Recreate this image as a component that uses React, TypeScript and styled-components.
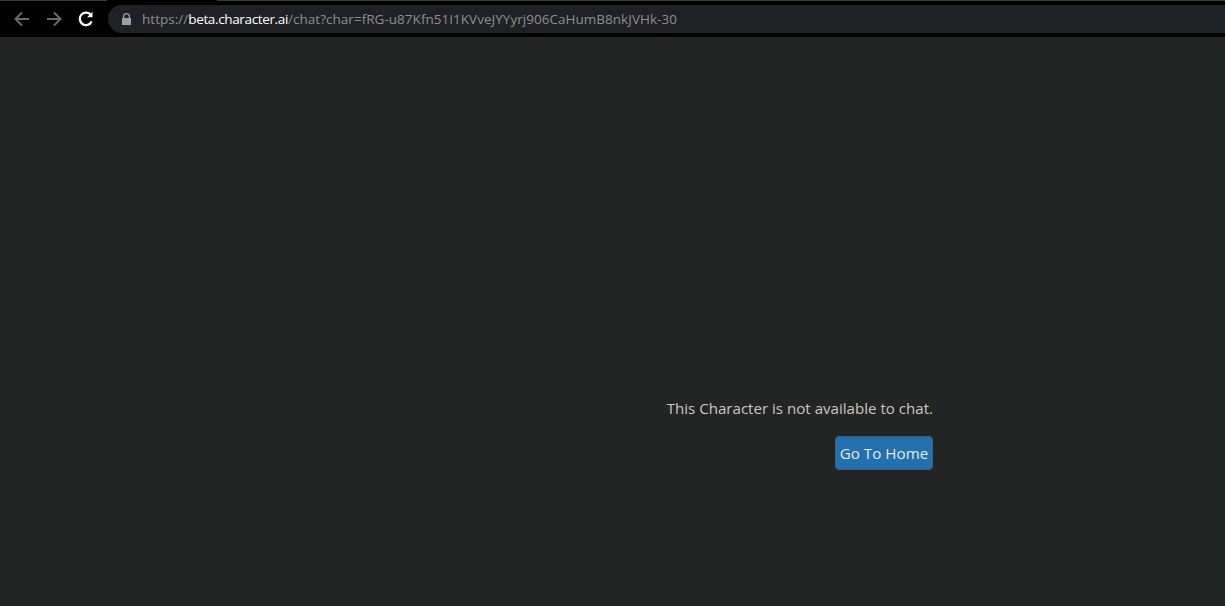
import React from "react";
import styled, { createGlobalStyle } from "styled-components";

const Global = createGlobalStyle`
  html, body { margin: 0; padding: 0; height: 100%; background: #232524; overflow: hidden; }
  #root { height: 100%; }
`;

const Page = styled.div`
  height: 606px;
  display: flex;
  flex-direction: column;
  background: #232524;
`;

const TabStrip = styled.div`
  height: 1px;
  flex: none;
  display: flex;
  background: #3a3b3d;
`;

const ActiveTab = styled.div`
  width: 110px;
  margin-left: 107px;
  background: #000;
`;

const Toolbar = styled.div`
  height: 36px;
  flex: none;
  box-sizing: border-box;
  padding: 4px 0;
  display: flex;
  align-items: center;
  background: #000;
`;

const NavGroup = styled.div`
  width: 108px;
  flex: none;
  box-sizing: border-box;
  padding-left: 13px;
  display: flex;
  align-items: center;
  gap: 14px;
`;

const NavIcon = styled.svg<{ $on?: boolean }>`
  width: 18px;
  height: 18px;
  flex: none;
  fill: none;
  stroke: ${(p) => (p.$on ? "#fff" : "#6a6a6a")};
  stroke-width: ${(p) => (p.$on ? 2.3 : 2)};
`;

const Omnibox = styled.div`
  flex: 1;
  height: 28px;
  display: flex;
  align-items: center;
  padding-left: 13px;
  border-radius: 14px 0 0 14px;
  background: #202124;
  font: 13.5px "Open Sans", "Noto Sans", sans-serif;
  letter-spacing: 0.03px;
  color: #8d8e90;
  white-space: nowrap;
`;

const Lock = styled.svg`
  width: 11px;
  height: 12px;
  flex: none;
  margin-right: 10px;
  fill: #9aa0a6;
`;

const Host = styled.span`
  color: #fff;
  font-weight: 500;
  letter-spacing: -0.36px;
`;

const Content = styled.main`
  flex: 1;
  display: flex;
  flex-direction: column;
  align-items: flex-end;
  padding: 361px 292px 0 0;
  font: 15.1px "Open Sans", "Noto Sans", sans-serif;
  color: #c9c7c3;
`;

const Message = styled.p`
  margin: 0;
  line-height: 20px;
`;

const HomeButton = styled.button`
  margin-top: 18px;
  height: 34px;
  width: 98px;
  padding: 0;
  box-sizing: border-box;
  border: 1px solid #3f5f7a;
  border-radius: 4px;
  background: #2270ae;
  color: #e4e8ea;
  font: 15.2px "Open Sans", "Noto Sans", sans-serif;
`;

export default function App() {
  return (
    <Page>
      <Global />
      <TabStrip>
        <ActiveTab />
      </TabStrip>
      <Toolbar>
        <NavGroup>
          <NavIcon viewBox="0 0 18 18">
            <path d="M16 9H3M9 2.5 2.5 9 9 15.5" />
          </NavIcon>
          <NavIcon viewBox="0 0 18 18">
            <path d="M2 9h13M9 2.5 15.5 9 9 15.5" />
          </NavIcon>
          <NavIcon $on viewBox="0 0 18 18">
            <path d="M14.6 11.5A6.2 6.2 0 1 1 14 5.2" />
            <path d="M15.5 1.8v5.4h-5.4" fill="#fff" stroke="none" />
          </NavIcon>
        </NavGroup>
        <Omnibox>
          <Lock viewBox="0 0 11 12">
            <path d="M2 5V3.5a3.5 3.5 0 0 1 7 0V5h1v7H1V5zm1.3 0h4.4V3.5a2.2 2.2 0 0 0-4.4 0z" />
          </Lock>
          https://<Host>beta.character.ai</Host>/chat?char=fRG-u87Kfn51I1KVveJYYyrj906CaHumB8nkJVHk-30
        </Omnibox>
      </Toolbar>
      <Content>
        <Message>This Character is not available to chat.</Message>
        <HomeButton>Go To Home</HomeButton>
      </Content>
    </Page>
  );
}
